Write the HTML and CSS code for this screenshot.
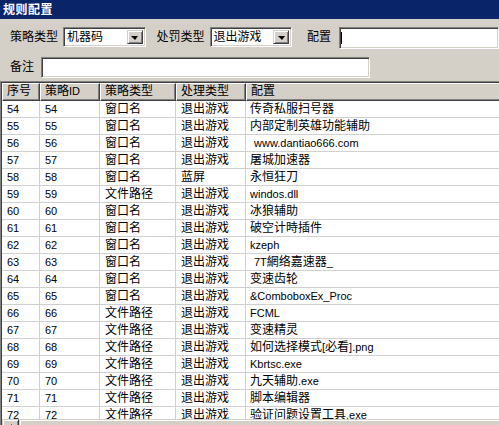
FILE: index.html
```html
<!DOCTYPE html>
<html lang="zh-CN">
<head>
<meta charset="utf-8">
<title>规则配置</title>
<link rel="stylesheet" href="styles.css">
</head>
<body>
<div class="window">
  <div class="title">规则配置</div>
  <div class="form">
    <div class="form-row first">
      <span class="label">策略类型</span>
      <div class="combo combo-a">
        <span class="combo-text">机器码</span>
        <span class="combo-btn"><span class="arrow-down"></span></span>
      </div>
      <span class="label label-b">处罚类型</span>
      <div class="combo combo-b">
        <span class="combo-text">退出游戏</span>
        <span class="combo-btn"><span class="arrow-down"></span></span>
      </div>
      <span class="label label-c">配置</span>
      <div class="field field-config"><span class="caret"></span></div>
    </div>
    <div class="form-row second">
      <span class="label">备注</span>
      <div class="field field-note"></div>
    </div>
  </div>
  <div class="list">
    <div class="header">
      <div class="hcell">序号</div>
      <div class="hcell">策略<span class="n">ID</span></div>
      <div class="hcell">策略类型</div>
      <div class="hcell">处理类型</div>
      <div class="hcell">配置</div>
    </div>
    <div class="rows">
      <div class="row"><div class="cell n">54</div><div class="cell n">54</div><div class="cell">窗口名</div><div class="cell">退出游戏</div><div class="cell">传奇私服扫号器</div></div>
      <div class="row"><div class="cell n">55</div><div class="cell n">55</div><div class="cell">窗口名</div><div class="cell">退出游戏</div><div class="cell">内部定制英雄功能辅助</div></div>
      <div class="row"><div class="cell n">56</div><div class="cell n">56</div><div class="cell">窗口名</div><div class="cell">退出游戏</div><div class="cell n lead">www.dantiao666.com</div></div>
      <div class="row"><div class="cell n">57</div><div class="cell n">57</div><div class="cell">窗口名</div><div class="cell">退出游戏</div><div class="cell">屠城加速器</div></div>
      <div class="row"><div class="cell n">58</div><div class="cell n">58</div><div class="cell">窗口名</div><div class="cell">蓝屏</div><div class="cell">永恒狂刀</div></div>
      <div class="row"><div class="cell n">59</div><div class="cell n">59</div><div class="cell">文件路径</div><div class="cell">退出游戏</div><div class="cell n">windos.dll</div></div>
      <div class="row"><div class="cell n">60</div><div class="cell n">60</div><div class="cell">窗口名</div><div class="cell">退出游戏</div><div class="cell">冰狼辅助</div></div>
      <div class="row"><div class="cell n">61</div><div class="cell n">61</div><div class="cell">窗口名</div><div class="cell">退出游戏</div><div class="cell">破空计時插件</div></div>
      <div class="row"><div class="cell n">62</div><div class="cell n">62</div><div class="cell">窗口名</div><div class="cell">退出游戏</div><div class="cell n">kzeph</div></div>
      <div class="row"><div class="cell n">63</div><div class="cell n">63</div><div class="cell">窗口名</div><div class="cell">退出游戏</div><div class="cell lead"><span class="n">7T</span>網络嘉速器<span class="n">_</span></div></div>
      <div class="row"><div class="cell n">64</div><div class="cell n">64</div><div class="cell">窗口名</div><div class="cell">退出游戏</div><div class="cell">变速齿轮</div></div>
      <div class="row"><div class="cell n">65</div><div class="cell n">65</div><div class="cell">窗口名</div><div class="cell">退出游戏</div><div class="cell n">&amp;ComboboxEx_Proc</div></div>
      <div class="row"><div class="cell n">66</div><div class="cell n">66</div><div class="cell">文件路径</div><div class="cell">退出游戏</div><div class="cell n">FCML</div></div>
      <div class="row"><div class="cell n">67</div><div class="cell n">67</div><div class="cell">文件路径</div><div class="cell">退出游戏</div><div class="cell">变速精灵</div></div>
      <div class="row"><div class="cell n">68</div><div class="cell n">68</div><div class="cell">文件路径</div><div class="cell">退出游戏</div><div class="cell">如何选择模式<span class="n">[</span>必看<span class="n">].png</span></div></div>
      <div class="row"><div class="cell n">69</div><div class="cell n">69</div><div class="cell">文件路径</div><div class="cell">退出游戏</div><div class="cell n">Kbrtsc.exe</div></div>
      <div class="row"><div class="cell n">70</div><div class="cell n">70</div><div class="cell">文件路径</div><div class="cell">退出游戏</div><div class="cell">九天辅助<span class="n">.exe</span></div></div>
      <div class="row"><div class="cell n">71</div><div class="cell n">71</div><div class="cell">文件路径</div><div class="cell">退出游戏</div><div class="cell">脚本编辑器</div></div>
      <div class="row"><div class="cell n">72</div><div class="cell n">72</div><div class="cell">文件路径</div><div class="cell">退出游戏</div><div class="cell">验证问题设置工具<span class="n">.exe</span></div></div>
    </div>
    <div class="hscroll">
      <div class="sbtn"><span class="arrow-left"></span></div>
      <div class="thumb"></div>
    </div>
  </div>
</div>
</body>
</html>
```

FILE: styles.css
```css
html, body {
  margin: 0;
  padding: 0;
}
body {
  width: 499px;
  height: 425px;
  overflow: hidden;
  background: #d4d0c8;
  font-family: "Liberation Sans", "Noto Sans CJK SC", sans-serif;
  font-size: 12px;
  color: #000;
}
.window {
  display: flex;
  flex-direction: column;
  height: 425px;
}
.title {
  height: 19px;
  box-sizing: border-box;
  padding: 1px 0 0 3px;
  line-height: 18px;
  background: #0a246a;
  color: #fff;
  font-weight: bold;
  font-size: 12px;
  letter-spacing: 0.5px;
}
.form {
  display: flex;
  flex-direction: column;
  padding-left: 10px;
}
.form-row {
  display: flex;
  align-items: flex-start;
}
.form-row.first {
  margin-top: 8px;
  height: 22px;
}
.form-row.second {
  margin-top: 8px;
  height: 21px;
}
.label {
  line-height: 20px;
  white-space: nowrap;
}
.first .label {
  width: 48px;
  margin-right: 5px;
}
.label-b {
  margin-left: 11px;
}
.first .label-c {
  width: 24px;
  margin-left: 15px;
  margin-right: 8px;
}
.second .label {
  width: 25px;
  margin-right: 6px;
}
.combo, .field {
  box-sizing: border-box;
  background: #fff;
  border-style: solid;
  border-width: 1px;
  border-color: #808080 #fff #fff #808080;
  box-shadow: inset 1px 1px 0 #404040, inset -1px -1px 0 #d4d0c8;
}
.combo {
  width: 89px;
  height: 20px;
  display: flex;
  align-items: stretch;
  padding: 2px;
}
.combo-text {
  flex: 1;
  line-height: 15px;
  padding-left: 1px;
  white-space: nowrap;
  overflow: hidden;
}
.combo-btn {
  width: 16px;
  box-sizing: border-box;
  background: #d4d0c8;
  border-style: solid;
  border-width: 1px;
  border-color: #d4d0c8 #404040 #404040 #d4d0c8;
  box-shadow: inset 1px 1px 0 #fff, inset -1px -1px 0 #808080;
  display: flex;
  align-items: center;
  justify-content: center;
}
.arrow-down {
  width: 0;
  height: 0;
  border-left: 4px solid transparent;
  border-right: 3px solid transparent;
  border-top: 4px solid #000;
  margin-top: 1px;
}
.field-config {
  width: 160px;
  height: 22px;
  flex: none;
  padding: 4px 0 0 1px;
}
.caret {
  display: block;
  width: 1px;
  height: 12px;
  background: #000;
}
.field-note {
  width: 329px;
  height: 21px;
}
.list {
  margin-top: 3px;
  flex: none;
  width: 520px;
  box-sizing: border-box;
  border-top: 1px solid #808080;
  border-left: 1px solid #808080;
  box-shadow: inset 1px 1px 0 #404040;
  padding: 1px 0 0 1px;
  background: #fff;
  display: flex;
  flex-direction: column;
}
.header, .row {
  display: grid;
  grid-template-columns: 38px 60px 76px 70px 1fr;
}
.hcell {
  height: 18px;
  box-sizing: border-box;
  background: #d4d0c8;
  border-style: solid;
  border-width: 1px;
  border-color: #fff #404040 #404040 #fff;
  box-shadow: inset -1px -1px 0 #808080;
  padding-left: 4px;
  line-height: 15px;
  white-space: nowrap;
  overflow: hidden;
}
.rows {
  height: 318px;
  overflow: hidden;
  background: #fff;
}
.cell {
  height: 17px;
  box-sizing: border-box;
  border-right: 1px solid #d0d0d0;
  border-bottom: 1px solid #d0d0d0;
  padding-left: 5px;
  line-height: 16px;
  white-space: nowrap;
  overflow: hidden;
}
.cell:last-child {
  border-right: none;
  padding-left: 4px;
}
.cell.lead {
  padding-left: 8px;
}
.n {
  font-size: 11px;
}
.hscroll {
  height: 17px;
  display: flex;
  background: #d4d0c8;
}
.sbtn {
  width: 17px;
  box-sizing: border-box;
  border-style: solid;
  border-width: 1px;
  border-color: #d4d0c8 #404040 #404040 #d4d0c8;
  box-shadow: inset 1px 1px 0 #fff, inset -1px -1px 0 #808080;
  display: flex;
  align-items: center;
  justify-content: center;
}
.arrow-left {
  width: 0;
  height: 0;
  border-top: 4px solid transparent;
  border-bottom: 4px solid transparent;
  border-right: 4px solid #000;
  margin-left: -2px;
}
.thumb {
  flex: 1;
  box-sizing: border-box;
  border-style: solid;
  border-width: 1px;
  border-color: #d4d0c8 #404040 #404040 #d4d0c8;
  box-shadow: inset 1px 1px 0 #fff, inset -1px -1px 0 #808080;
}
```
